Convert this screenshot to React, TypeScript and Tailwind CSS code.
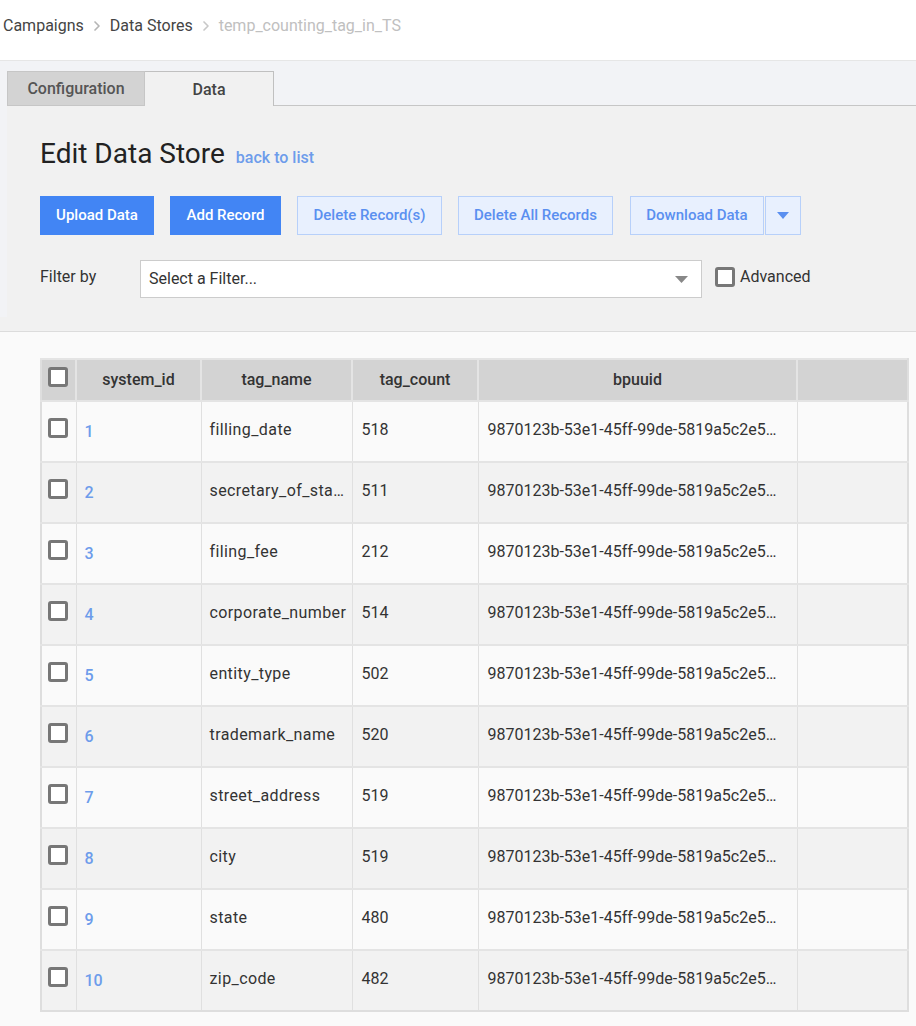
import { ChevronRight } from 'lucide-react'

const rows = [
  { id: 1, name: 'filling_date', count: 518 },
  { id: 2, name: 'secretary_of_state', count: 511 },
  { id: 3, name: 'filing_fee', count: 212 },
  { id: 4, name: 'corporate_number', count: 514 },
  { id: 5, name: 'entity_type', count: 502 },
  { id: 6, name: 'trademark_name', count: 520 },
  { id: 7, name: 'street_address', count: 519 },
  { id: 8, name: 'city', count: 519 },
  { id: 9, name: 'state', count: 480 },
  { id: 10, name: 'zip_code', count: 482 },
]

const uuid = '9870123b-53e1-45ff-99de-5819a5c2e5f0a1b2c3d4'

function Box() {
  return <span className="inline-block w-5 h-5 border-[3px] border-[#777] rounded-[3px] bg-white" />
}

export default function App() {
  return (
    <div className="w-[916px] min-h-[1026px] bg-[#fafafa] text-[#333]" style={{ fontFamily: 'Roboto, "Liberation Sans", sans-serif' }}>
      {/* Breadcrumb */}
      <div className="h-[61px] bg-white border-b border-[#e6e6e6] flex items-start pt-[16px] pl-[3px] text-[16px] leading-5">
        <span className="text-[#444]">Campaigns</span>
        <ChevronRight size={16} strokeWidth={2.5} className="text-[#b5b5b5] mx-[5px] mt-[2px]" />
        <span className="text-[#444]">Data Stores</span>
        <ChevronRight size={16} strokeWidth={2.5} className="text-[#c8c8c8] mx-[5px] mt-[2px]" />
        <span className="text-[#c0c0c0]">temp_counting_tag_in_TS</span>
      </div>

      {/* Tabs + panel */}
      <div className="bg-[#f2f3f6] pt-[10px] pl-[7px]">
        <div className="flex h-[35px]">
          <div className="w-[138px] bg-[#d3d3d3] border border-[#c6c6c6] flex items-center justify-center pt-[1px] text-[16px] font-medium text-[#555]">
            Configuration
          </div>
          <div className="w-[129px] bg-[#f1f1f1] border border-l-0 border-[#c0c0c0] border-b-0 flex items-center justify-center pt-[1px] text-[16px] font-medium text-[#444]">
            Data
          </div>
          <div className="flex-1 border-b border-[#c6c6c6]" />
        </div>
        <div className="bg-[#f1f1f1] pl-[33px] pt-[31px] pb-[19px]">
          <div className="flex items-baseline gap-[11px]">
            <h1 className="text-[28px] leading-[34px] text-[#222]">Edit Data Store</h1>
            <span className="text-[16px] text-[#6d9ceb] font-medium">back to list</span>
          </div>
          <div className="flex gap-4 mt-[25px] text-[15px] font-medium">
            <button className="h-[39px] w-[114px] bg-[#4285f4] text-white">Upload Data</button>
            <button className="h-[39px] w-[111px] bg-[#4285f4] text-white">Add Record</button>
            <button className="h-[39px] w-[145px] bg-[#e8f0fe] border border-[#b7d0fa] text-[#5a8ff0]">Delete Record(s)</button>
            <button className="h-[39px] w-[155px] bg-[#e8f0fe] border border-[#b7d0fa] text-[#5a8ff0]">Delete All Records</button>
            <div className="flex gap-px ml-px">
              <button className="h-[39px] w-[134px] bg-[#e8f0fe] border border-[#b7d0fa] text-[#5a8ff0]">Download Data</button>
              <button className="h-[39px] w-9 bg-[#e8f0fe] border border-[#b7d0fa] flex items-center justify-center">
                <svg width="12" height="7" viewBox="0 0 12 7"><path d="M0 0h12L6 7z" fill="#5a8ff0" /></svg>
              </button>
            </div>
          </div>
          <div className="flex items-center mt-[25px] text-[16px]">
            <span className="w-[100px] text-[#333] -mt-[4px]">Filter by</span>
            <div className="w-[562px] h-[38px] bg-white border border-[#cccccc] flex items-center pl-2 pr-[13px]">
              <span className="flex-1 text-[#333]">Select a Filter...</span>
              <svg width="13" height="7" viewBox="0 0 13 7"><path d="M0 0h13L6.5 7z" fill="#888" /></svg>
            </div>
            <label className="flex items-center gap-[5px] ml-[13px] -mt-[4px] text-[#333]">
              <Box />
              Advanced
            </label>
          </div>
        </div>
      </div>
      <div className="h-[15px] bg-[#f1f1f1] border-b border-[#dcdcdc]" />

      {/* Table */}
      <div className="pt-[26px] pl-[40px] pb-4">
        <table className="table-fixed border-collapse w-[869px] border-2 border-[#dedede] border-t-[#e4e4e4] text-[16px]">
          <colgroup>
            <col className="w-[35px]" />
            <col className="w-[125px]" />
            <col className="w-[151px]" />
            <col className="w-[126px]" />
            <col className="w-[319px]" />
            <col className="w-[111px]" />
          </colgroup>
          <thead>
            <tr className="h-[42px] bg-[#d3d3d3]">
              <th className="border-r-2 border-[#e4e4e4] pl-[6px] text-left align-middle"><Box /></th>
              <th className="border-r-2 border-[#e4e4e4] font-medium text-[#333]">system_id</th>
              <th className="border-r-2 border-[#e4e4e4] font-medium text-[#333]">tag_name</th>
              <th className="border-r-2 border-[#e4e4e4] font-medium text-[#333]">tag_count</th>
              <th className="border-r-2 border-[#e4e4e4] font-medium text-[#333]">bpuuid</th>
              <th />
            </tr>
          </thead>
          <tbody>
            {rows.map((r, i) => (
              <tr key={r.id} className={`h-[61px] border-t-2 border-[#e4e4e4] ${i % 2 ? 'bg-[#f2f2f2]' : 'bg-[#fafafa]'}`}>
                <td className="border-r border-[#e0e0e0] pl-[6px] align-top pt-[16px]"><Box /></td>
                <td className="border-r border-[#e0e0e0] pl-[8px] pt-[1px] text-[#6d9ceb] font-medium">{r.id}</td>
                <td className="border-r border-[#e0e0e0] pl-[8px] pr-[4px] pb-[4px] tracking-[0.4px] truncate">{r.name}</td>
                <td className="border-r border-[#e0e0e0] pl-[9px] pb-[4px]">{r.count}</td>
                <td className="border-r border-[#e0e0e0] pl-[9px] pr-[20px] pb-[4px] truncate">{uuid}</td>
                <td />
              </tr>
            ))}
          </tbody>
        </table>
      </div>
    </div>
  )
}
